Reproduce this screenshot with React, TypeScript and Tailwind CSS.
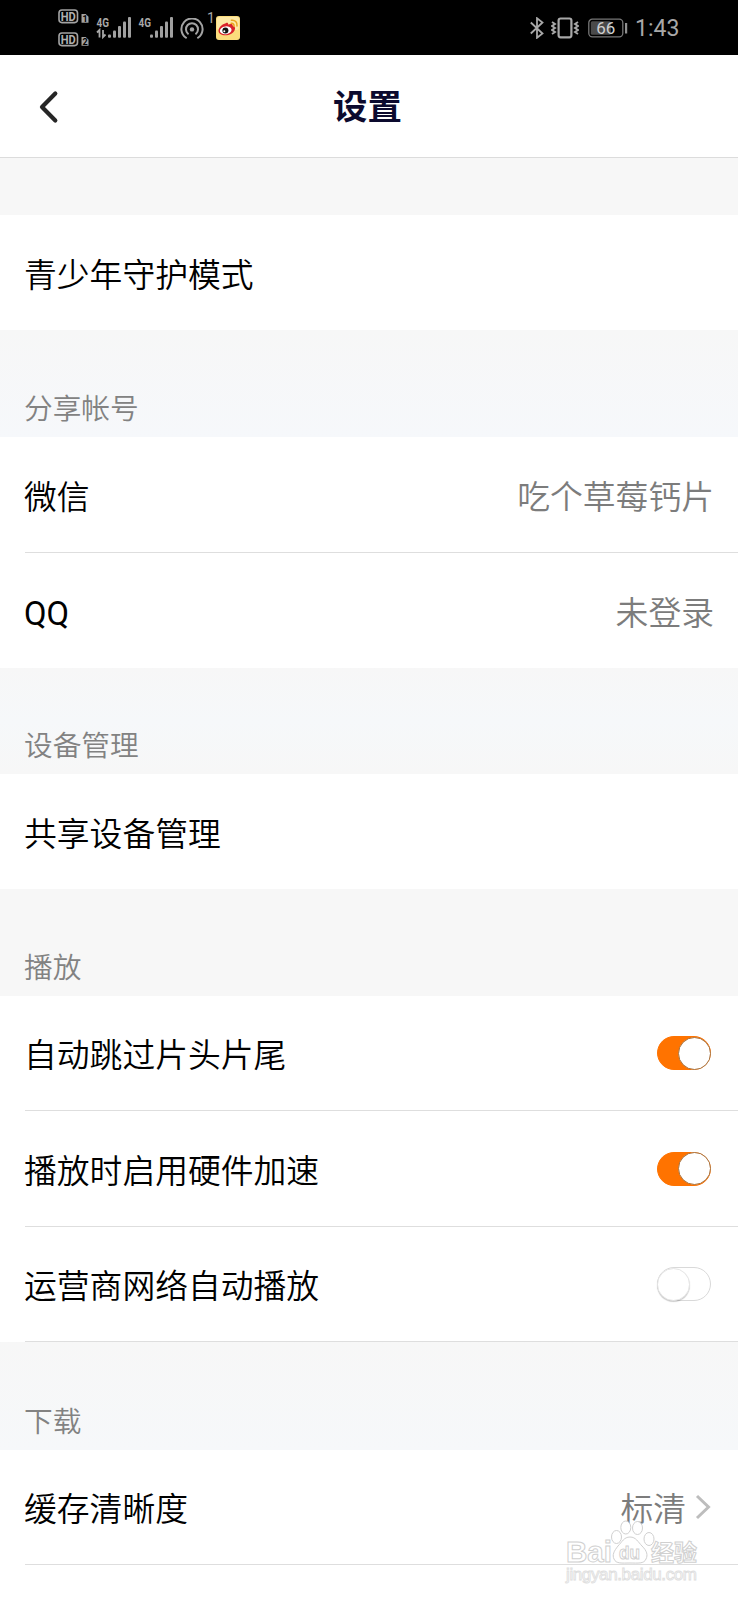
import { useState } from 'react';

interface SettingItem {
  label: string;
  value?: string;
  arrow?: boolean;
  toggle?: boolean;
  height: string;
  divider?: boolean;
  labelClass?: string;
}

interface SettingSection {
  title?: string;
  headerClass: string;
  items: SettingItem[];
}

const sections: SettingSection[] = [
  {
    headerClass: 'h-[57px] bg-[#f7f7f7]',
    items: [{ label: '青少年守护模式', height: 'h-[115px]' }],
  },
  {
    title: '分享帐号',
    headerClass: 'h-[107px] bg-linear-to-b from-[#f7f7f7] to-[#f6f8fb]',
    items: [
      { label: '微信', value: '吃个草莓钙片', height: 'h-[116px]', divider: true },
      { label: 'QQ', value: '未登录', height: 'h-[115px]', labelClass: 'font-normal' },
    ],
  },
  {
    title: '设备管理',
    headerClass: 'h-[106px] bg-linear-to-b from-[#f7f7f7] via-[#f6f8fa] to-[#f7f7f7]',
    items: [{ label: '共享设备管理', height: 'h-[115px]' }],
  },
  {
    title: '播放',
    headerClass: 'h-[107px] bg-[#f7f7f7]',
    items: [
      { label: '自动跳过片头片尾', toggle: true, height: 'h-[115px]', divider: true },
      { label: '播放时启用硬件加速', toggle: true, height: 'h-[116px]', divider: true },
      { label: '运营商网络自动播放', toggle: false, height: 'h-[115px]', divider: true },
    ],
  },
  {
    title: '下载',
    headerClass: 'h-[108px] bg-linear-to-b from-[#f7f7f7] to-[#f6f8fa]',
    items: [{ label: '缓存清晰度', value: '标清', arrow: true, height: 'h-[115px]', divider: true }],
  },
];

function HdBadge({ sim }: { sim: string }) {
  return (
    <svg className="w-[31px] h-[15px]" viewBox="0 0 31 15">
      <rect x="1" y="1" width="18.5" height="12.6" rx="3" fill="none" stroke="#a3a3a3" strokeWidth="1.6" />
      <text x="10.2" y="12" textAnchor="middle" fontSize="13" fontWeight="700" fill="#b0b0b0" textLength="15" lengthAdjust="spacingAndGlyphs">HD</text>
      <path d="M23.5 5h4.2l2.8 2.8v6h-7z" fill="#a3a3a3" />
      <text x="27" y="12.7" textAnchor="middle" fontSize="9" fontWeight="700" fill="#000">{sim}</text>
    </svg>
  );
}

function Signal({ data }: { data?: boolean }) {
  return (
    <svg className="w-9 h-[23px] overflow-visible" viewBox="0 0 36 23">
      <text x="0.5" y="10.6" fontSize="13" fontWeight="700" fill="#a8a8a8" textLength="12.5" lengthAdjust="spacingAndGlyphs">4G</text>
      {data && (
        <path d="M1 16.5L3.5 14v7.5M7 14v7l2.5-2.5" fill="none" stroke="#a8a8a8" strokeWidth="1.8" />
      )}
      <g fill="#a0a0a0">
        <rect x="12" y="18.5" width="3" height="3.2" rx="1" />
        <rect x="17" y="14.5" width="3" height="7.2" rx="1" />
        <rect x="22" y="10" width="3" height="11.7" rx="1" />
        <rect x="27" y="5.5" width="3" height="16.2" rx="1" />
        <rect x="32" y="1" width="3" height="20.7" rx="1" />
      </g>
    </svg>
  );
}

function HotspotIcon() {
  return (
    <svg className="w-6 h-[22px]" viewBox="0 0 24 22" fill="none" stroke="#a3a3a3" strokeWidth="2" strokeLinecap="round">
      <path d="M6 19.8a10.6 10.6 0 1 1 12 0" />
      <path d="M8 15.7a6 6 0 1 1 8 0" />
      <circle cx="12" cy="11.4" r="2.2" fill="#a3a3a3" stroke="none" />
    </svg>
  );
}

function WeiboIcon() {
  return (
    <svg className="w-6 h-6" viewBox="0 0 24 24">
      <rect width="24" height="24" rx="3" fill="#fbdc7c" />
      <rect x="1" y="1" width="22" height="13" rx="2" fill="#fde9a6" />
      <path d="M9.8 7.2c1.5-.9 2.6-.2 2.3 1.3 2.2-.9 4.8-1 4.6 1.3 2.4.6 3 2.3 1.8 4.6-1.4 2.8-5 4.9-9 4.9-4.3 0-7.2-2-7-4.9.2-3 3.8-6.5 7.3-7.2z" fill="#d9232b" />
      <ellipse cx="9.7" cy="14.3" rx="5.9" ry="3.9" transform="rotate(-8 9.7 14.3)" fill="#fff" />
      <circle cx="9.4" cy="14.6" r="3" fill="#111" />
      <circle cx="8.3" cy="15.3" r="1" fill="#fff" />
      <path d="M15.2 7.3c1.9-.2 3.1 1 2.8 3M15.4 4.2c3.6-.5 6.1 2 5.6 5.8" fill="none" stroke="#eaa51f" strokeWidth="1.5" strokeLinecap="round" />
    </svg>
  );
}

function StatusBar() {
  return (
    <div className="h-[55px] bg-black flex items-start justify-between px-[58px] text-[#a8a8a8] font-normal font-[Roboto,sans-serif]">
      <div className="flex items-start">
        <div className="flex flex-col gap-2 pt-[9px]">
          <HdBadge sim="1" />
          <HdBadge sim="2" />
        </div>
        <div className="flex gap-[6px] pt-4 ml-[7px]">
          <Signal data />
          <Signal />
        </div>
        <div className="pt-[18px] ml-[6px]">
          <HotspotIcon />
        </div>
        <span className="pt-[10px] ml-[2px] w-[10px] text-center text-[14px] leading-4">1</span>
        <div className="pt-4">
          <WeiboIcon />
        </div>
      </div>
      <div className="flex items-center h-[55px] pr-px">
        <svg className="w-[14px] h-[22px]" viewBox="0 0 14 22" fill="none" stroke="#a8a8a8" strokeWidth="1.8">
          <path d="M.8 5.5l11.7 11L7 20.8V1.2l5.5 4.3L.8 16.5" />
        </svg>
        <svg className="w-7 h-[22px] ml-[7px]" viewBox="0 0 28 22" fill="none" stroke="#a8a8a8">
          <rect x="7.6" y="1.5" width="12.8" height="18.8" rx="2" strokeWidth="2.2" />
          <path d="M1 5l3 2-3 2 3 2-3 2 3 2-3 2M27 5l-3 2 3 2-3 2 3 2-3 2 3 2" strokeWidth="1.9" />
        </svg>
        <svg className="w-10 h-5 ml-[9px]" viewBox="0 0 40 20">
          <rect x=".8" y="1.2" width="34" height="17.6" rx="3.5" fill="none" stroke="#777" strokeWidth="1.3" />
          <rect x="2.8" y="3.2" width="20" height="13.6" rx="1.5" fill="#4a4a4a" />
          <rect x="37" y="5" width="2.2" height="10.5" fill="#909090" />
          <text x="17.8" y="15.8" textAnchor="middle" fontSize="17" fill="#d0d0d0">66</text>
        </svg>
        <span className="ml-[7px] text-[23px] leading-none w-[44px] pt-px">1:43</span>
      </div>
    </div>
  );
}

function Switch({ initial }: { initial: boolean }) {
  const [on, setOn] = useState(initial);

  return (
    <button
      onClick={() => setOn(!on)}
      className={`w-[54px] h-[34px] mr-[3px] rounded-full border flex items-center ${
        on ? 'bg-[#ff7300] border-[#ff7300] justify-end' : 'bg-white border-[#d9d9d9] justify-start'
      }`}
    >
      <span
        className={`size-[33px] shrink-0 rounded-full bg-white border ${
          on
            ? '-mr-px border-[#a8733f]'
            : '-ml-px border-[#e6e6e6] shadow-[0_1px_1px_rgba(0,0,0,0.2)]'
        }`}
      />
    </button>
  );
}

function Row({ item }: { item: SettingItem }) {
  return (
    <div className={`bg-white pl-[25px] ${item.height}`}>
      <div className={`h-full flex items-center justify-between pr-6 ${item.divider ? 'border-b border-[#dedede]' : ''}`}>
        <span className={`text-[32.8px] leading-none text-black pt-[7px] -ml-px ${item.labelClass ?? ''}`}>{item.label}</span>
        {item.value && (
          <span className="flex items-center text-[32.8px] leading-none text-[#7c7c7c]">
            <span className="pt-[7px]">{item.value}</span>
            {item.arrow && (
              <svg className="w-4 h-[26px] ml-[9px] mr-[3px]" viewBox="0 0 16 26" fill="none" stroke="#bdbdbd" strokeWidth="3">
                <path d="M2 2l11.5 11L2 24" />
              </svg>
            )}
          </span>
        )}
        {item.toggle !== undefined && <Switch initial={item.toggle} />}
      </div>
    </div>
  );
}

function Watermark() {
  return (
    <svg className="absolute left-[564px] top-[1518px] w-[140px] h-[70px]" viewBox="0 0 140 70" fill="#fff" stroke="#d0d0d0" strokeWidth="1">
      <text x="2" y="43.5" fontSize="30" fontWeight="700" fontFamily="Liberation Sans, sans-serif" textLength="46" lengthAdjust="spacingAndGlyphs">Bai</text>
      <ellipse cx="52.5" cy="19" rx="5" ry="6.5" />
      <ellipse cx="61.8" cy="9.5" rx="5" ry="6.5" />
      <ellipse cx="73.5" cy="10" rx="5" ry="6.5" />
      <ellipse cx="85" cy="21" rx="5" ry="6.5" />
      <path d="M66 19c6 0 8 5 12 9 5 5 6 9 4 13-2 5-8 4-16 4s-14 1-16-4c-2-4 0-8 4-13 4-4 6-9 12-9z" />
      <text x="55" y="40.5" fontSize="19" fontWeight="700" fontFamily="Liberation Sans, sans-serif" textLength="21" lengthAdjust="spacingAndGlyphs">du</text>
      <text x="87" y="42.5" fontSize="23" fontWeight="700" textLength="46">经验</text>
      <text x="2" y="61.5" fontSize="17" fontFamily="Liberation Sans, sans-serif" stroke="#dedede" strokeWidth=".9" textLength="131">jingyan.baidu.com</text>
    </svg>
  );
}

export default function App() {
  return (
    <div className="relative w-[738px] h-[1600px] overflow-hidden bg-white font-[350] font-[Roboto,'Noto_Sans_CJK_SC',sans-serif]">
      <StatusBar />

      {/* Header */}
      <header className="h-[103px] border-b border-[#dcdcdc] grid grid-cols-3 items-center">
        <button className="pl-[38px] pt-px" aria-label="返回">
          <svg className="w-[22px] h-[34px]" viewBox="0 0 22 34" fill="none" stroke="#262626" strokeWidth="4.2" strokeLinecap="round" strokeLinejoin="round">
            <path d="M17.3 3.5L4 17l13.3 13.5" />
          </svg>
        </button>
        <h1 className="text-center text-[34.4px] leading-none font-bold text-[#0c0a2e] pr-[3px] pt-[2px]">设置</h1>
      </header>

      <main>
        {sections.map((section, i) => (
          <section key={i}>
            <div className={`flex items-end pl-6 pb-[13px] ${section.headerClass}`}>
              {section.title && (
                <h2 className="text-[28.7px] leading-none text-[#828282]">{section.title}</h2>
              )}
            </div>
            {section.items.map((item) => (
              <Row key={item.label} item={item} />
            ))}
          </section>
        ))}
      </main>

      <Watermark />
    </div>
  );
}
